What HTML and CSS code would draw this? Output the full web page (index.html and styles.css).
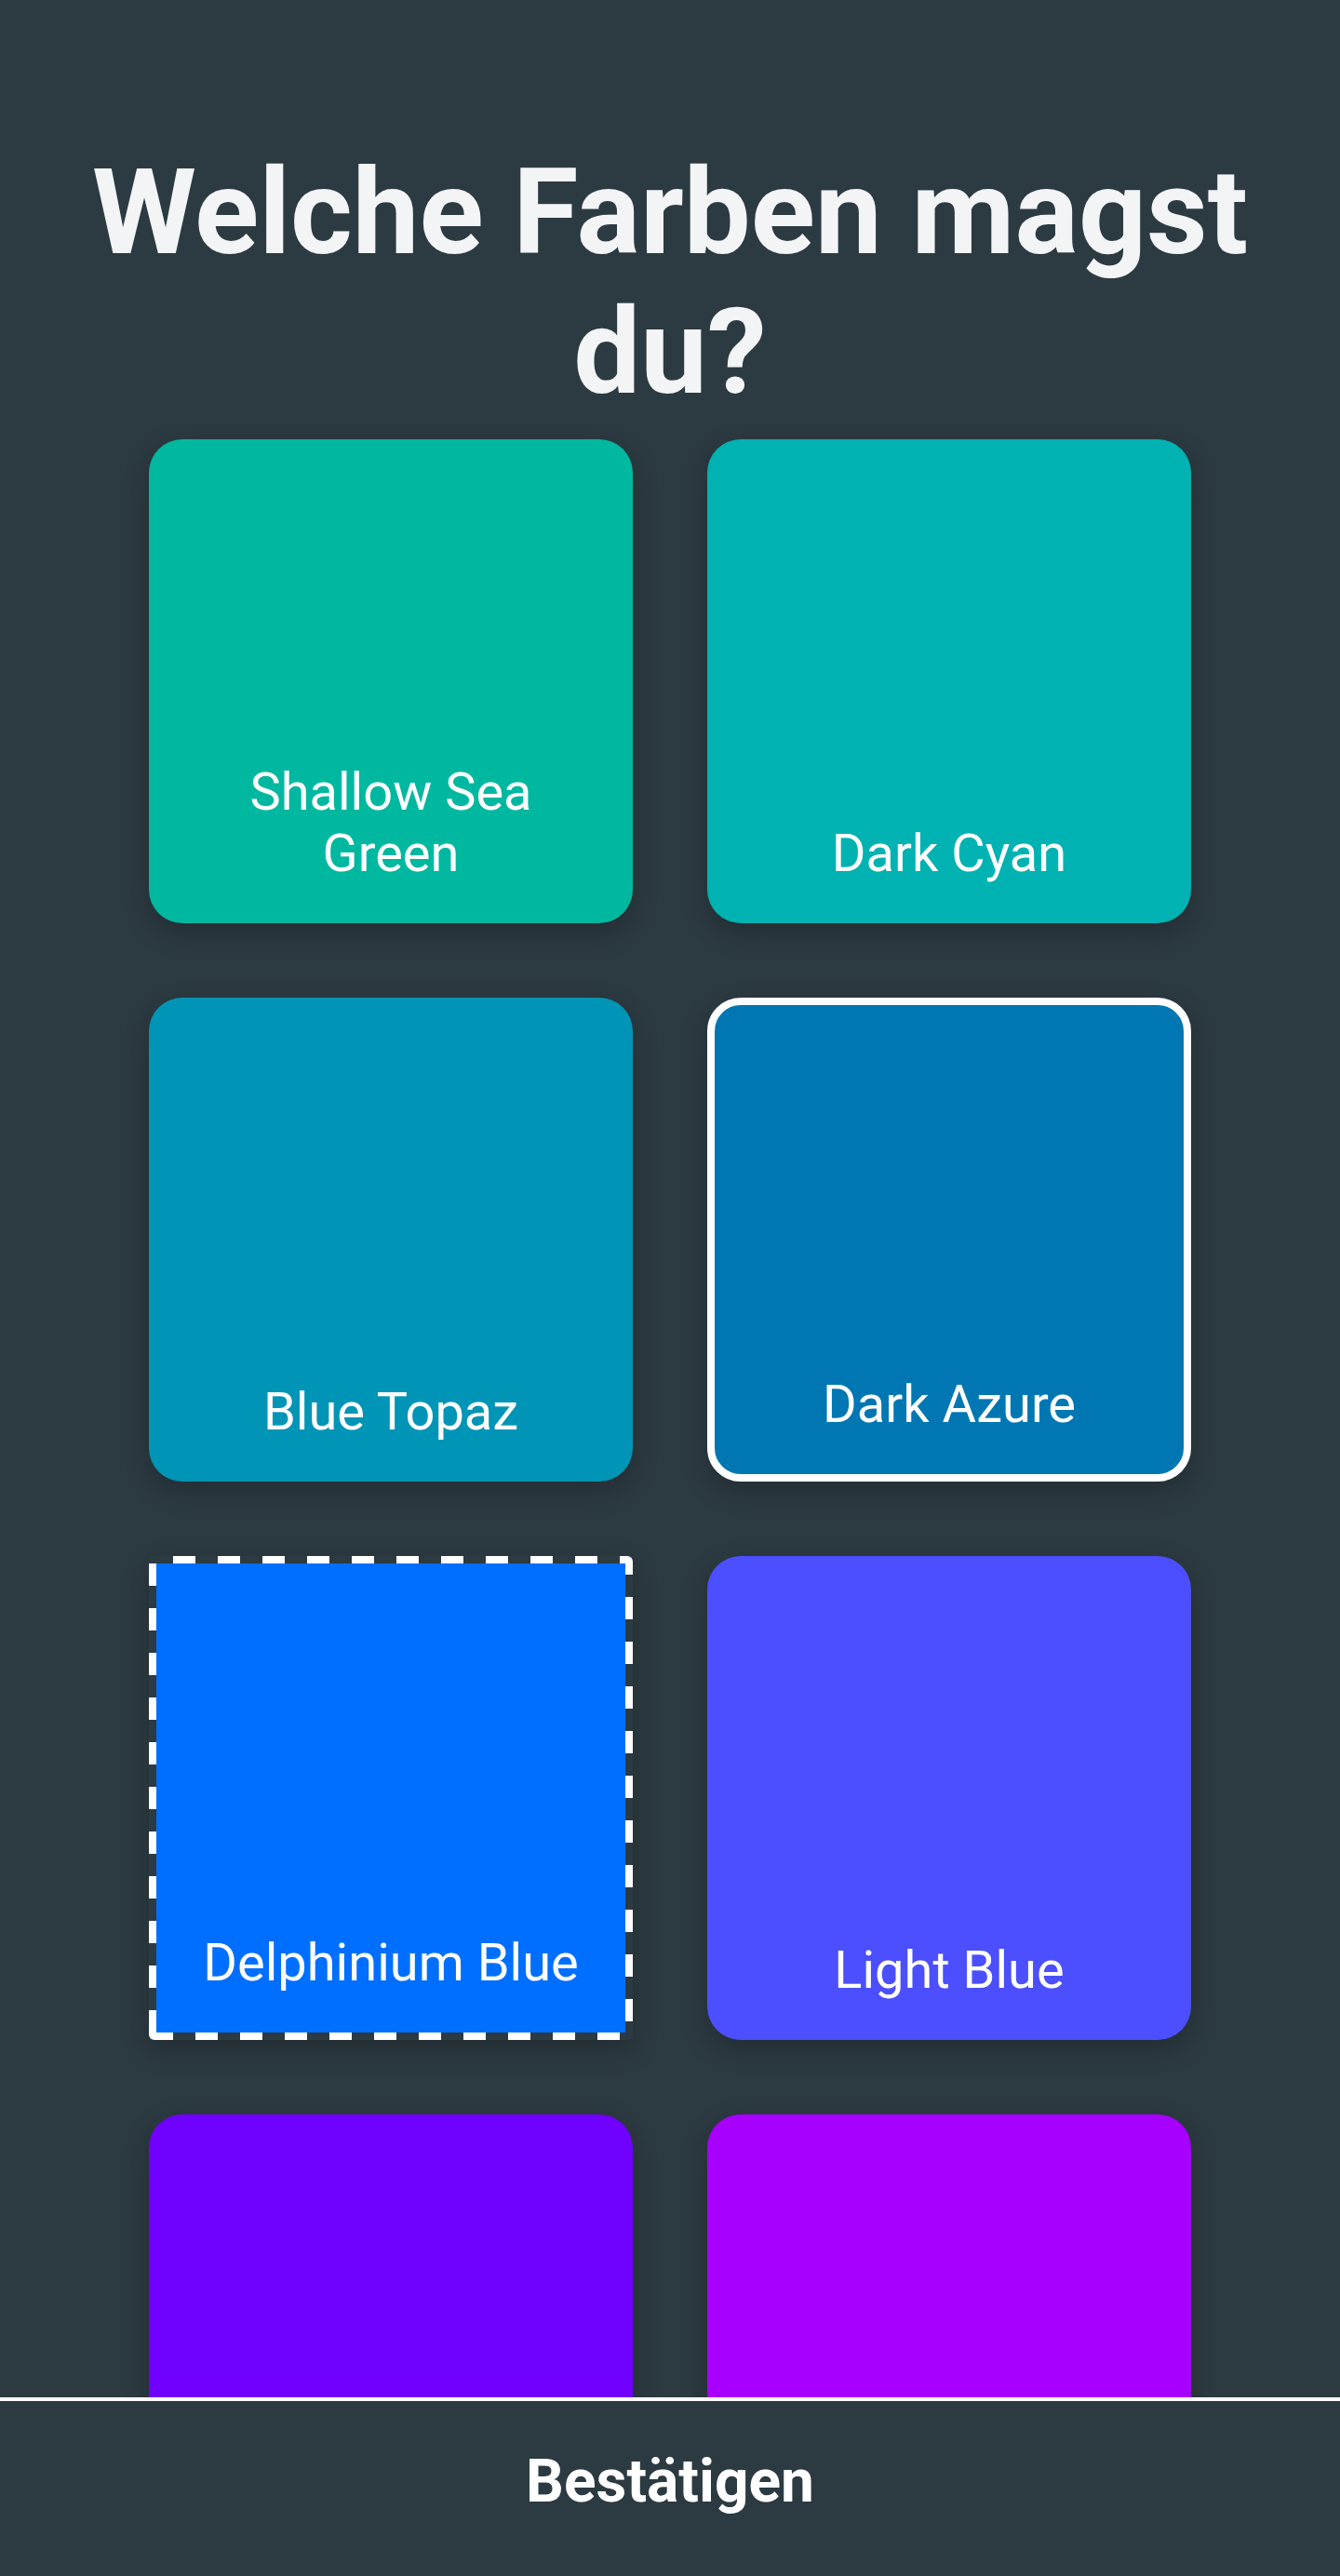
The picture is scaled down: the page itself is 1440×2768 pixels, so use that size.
FILE: index.html
```html
<!DOCTYPE html>
<html lang="de">
<head>
<meta charset="utf-8">
<title>Welche Farben magst du?</title>
<link rel="stylesheet" href="styles.css">
</head>
<body>
<div class="app">
  <main class="content">
    <h1 class="title">Welche Farben magst du?</h1>
    <div class="grid">
      <div class="swatch c-shallow"><span class="label">Shallow Sea Green</span></div>
      <div class="swatch c-cyan"><span class="label">Dark Cyan</span></div>
      <div class="swatch c-topaz"><span class="label">Blue Topaz</span></div>
      <div class="swatch c-azure selected"><span class="label">Dark Azure</span></div>
      <div class="swatch focused"><span class="label">Delphinium Blue</span></div>
      <div class="swatch c-light"><span class="label">Light Blue</span></div>
      <div class="swatch c-violet"></div>
      <div class="swatch c-purple"></div>
    </div>
  </main>
  <footer class="footer">
    <button class="confirm" type="button">Bestätigen</button>
  </footer>
</div>
</body>
</html>
```
FILE: styles.css
```css
html, body {
  margin: 0;
  padding: 0;
  background: #2c3a41;
}
body {
  font-family: Roboto, "Liberation Sans", sans-serif;
  color: #ffffff;
}
.app {
  height: 2768px;
  display: flex;
  flex-direction: column;
  overflow: hidden;
}
.content {
  flex: 1;
  overflow: hidden;
  padding-top: 153px;
}
.title {
  margin: 0;
  font-size: 128px;
  font-weight: 700;
  line-height: normal;
  text-align: center;
  color: #f3f4f6;
}
.grid {
  margin-top: 19px;
  display: grid;
  grid-template-columns: repeat(2, 520px);
  grid-auto-rows: 520px;
  gap: 80px;
  justify-content: center;
}
.swatch {
  box-sizing: border-box;
  border-radius: 36px;
  padding: 0 40px 42px;
  display: flex;
  align-items: flex-end;
  justify-content: center;
  text-align: center;
  box-shadow: 0 10px 28px rgba(0, 0, 0, 0.22);
}
.label {
  font-size: 56px;
  line-height: normal;
  font-weight: 400;
  color: #ffffff;
}
.c-shallow { background: #00b8a0; }
.c-cyan { background: #00b2b2; }
.c-topaz { background: #0095b6; }
.c-azure { background: #0077b3; }
.c-light { background: #4b4fff; }
.c-violet { background: #7000ff; }
.c-purple { background: #a800ff; }
.selected {
  border: 8px solid #ffffff;
}
.focused {
  border: 8px solid transparent;
  border-radius: 6px;
  background:
    repeating-linear-gradient(90deg, #ffffff 0 24px, transparent 24px 48px) 26px 0 / 100% 8px no-repeat border-box,
    repeating-linear-gradient(90deg, #ffffff 0 24px, transparent 24px 48px) 2px 100% / 100% 8px no-repeat border-box,
    repeating-linear-gradient(180deg, #ffffff 0 24px, transparent 24px 48px) 0 8px / 8px 100% no-repeat border-box,
    repeating-linear-gradient(180deg, #ffffff 0 24px, transparent 24px 48px) 100% -4px / 8px 100% no-repeat border-box,
    linear-gradient(90deg, #ffffff 0 26px, transparent 26px) 0 100% / 100% 8px no-repeat border-box,
    linear-gradient(#006fff, #006fff) padding-box;
}
.footer {
  flex: none;
  box-sizing: border-box;
  height: 192px;
  padding-bottom: 16px;
  border-top: 4px solid #ffffff;
  background: #2c3a41;
  display: flex;
  align-items: center;
  justify-content: center;
}
.confirm {
  background: none;
  border: 0;
  padding: 0;
  font-family: Roboto, "Liberation Sans", sans-serif;
  font-size: 64px;
  font-weight: 700;
  color: #ffffff;
  line-height: normal;
}
```
